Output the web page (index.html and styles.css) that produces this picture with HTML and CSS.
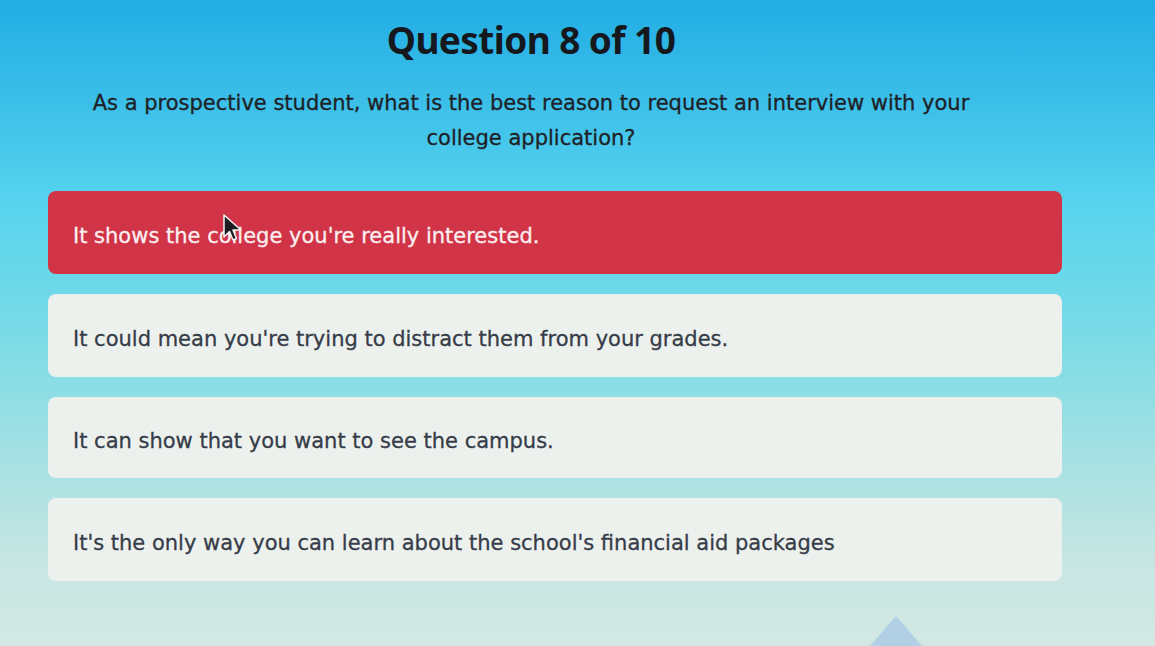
FILE: index.html
```html
<!DOCTYPE html>
<html lang="en">
<head>
    <meta charset="UTF-8">
    <meta name="viewport" content="width=device-width, initial-scale=1.0">
    <title>Question 8 of 10</title>
    <link rel="stylesheet" href="styles.css">
</head>
<body>
    <div class="quiz">
        <div class="quiz-header">
            <h1>Question 8 of 10</h1>
            <p class="prompt">As a prospective student, what is the best reason to request an interview with your college application?</p>
        </div>

        <div class="answers">
            <button class="answer selected">It shows the college you're really interested.</button>
            <button class="answer">It could mean you're trying to distract them from your grades.</button>
            <button class="answer short">It can show that you want to see the campus.</button>
            <button class="answer">It's the only way you can learn about the school's financial aid packages</button>
        </div>
    </div>

    <!-- mouse pointer resting on the first answer -->
    <svg class="pointer" width="22" height="30" viewBox="0 0 22 30">
        <path d="M2 2 L2 24 L7.5 18.5 L11 27 L14.5 25.5 L11 17 L19 17 Z" fill="#1c1c22" stroke="#f4f4f4" stroke-width="1.5" stroke-linejoin="round"/>
    </svg>

    <div class="peak"></div>
</body>
</html>
```

FILE: styles.css
```css
html, body {
    height: 100%;
}
body {
    margin: 0;
    overflow: hidden;
    font-family: "DejaVu Sans", "Noto Sans", sans-serif;
    background: linear-gradient(180deg, #22ade4 0%, #3fc2ea 18%, #58d4ee 32%, #7adbe6 52%, #a8e1e3 72%, #c8e6e2 88%, #d2e8e4 100%);
    position: relative;
}
.quiz {
    width: 1014px;
    margin-left: 48px;
    padding-top: 17px;
}
.quiz-header {
    text-align: center;
    padding-right: 48px;
}
h1 {
    margin: 0;
    font-family: "Noto Sans", sans-serif;
    font-size: 37px;
    font-weight: 700;
    color: #15181c;
    letter-spacing: -0.6px;
    line-height: 46px;
}
.prompt {
    margin: 23px auto 0;
    width: 940px;
    font-size: 21px;
    line-height: 35px;
    color: #1e2227;
    -webkit-text-stroke: 0.3px currentColor;
}
.answers {
    display: flex;
    flex-direction: column;
    gap: 20px;
    margin-top: 35px;
}
.answer {
    display: block;
    width: 100%;
    height: 83px;
    padding: 6px 25px 0;
    border: none;
    border-radius: 8px;
    background: #edf1ee;
    color: #363c48;
    font-family: inherit;
    font-size: 21px;
    text-align: left;
    cursor: pointer;
    -webkit-text-stroke: 0.3px currentColor;
}
.answer.short {
    height: 81px;
}
.answer.selected {
    background: #d13447;
    color: #fbeef0;
}
.pointer {
    position: absolute;
    left: 222px;
    top: 213px;
}
.peak {
    position: absolute;
    left: 870px;
    top: 616px;
    width: 0;
    height: 0;
    border-left: 26px solid transparent;
    border-right: 26px solid transparent;
    border-bottom: 30px solid #a9c9e6;
    opacity: 0.8;
}
```
